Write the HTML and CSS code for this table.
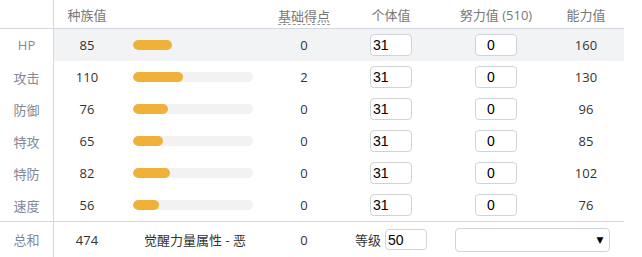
FILE: index.html
```html
<!DOCTYPE html>
<html lang="zh">
<head>
<meta charset="utf-8">
<link rel="stylesheet" href="styles.css">
</head>
<body>
<div class="stats">
  <div class="row head">
    <div class="c lbl"></div>
    <div class="c">种族值</div>
    <div class="c"></div>
    <div class="c"><span class="dotted">基础得点</span></div>
    <div class="c">个体值</div>
    <div class="c">努力值 (510)</div>
    <div class="c">能力值</div>
  </div>
  <div class="row hl">
    <div class="c lbl">HP</div>
    <div class="c num">85</div>
    <div class="c barc"><div class="track"><div class="fill" style="width:39px"></div></div></div>
    <div class="c num">0</div>
    <div class="c"><input class="box" value="31"></div>
    <div class="c"><input class="box ev" value="0"></div>
    <div class="c num">160</div>
  </div>
  <div class="row">
    <div class="c lbl">攻击</div>
    <div class="c num">110</div>
    <div class="c barc"><div class="track"><div class="fill" style="width:50px"></div></div></div>
    <div class="c num">2</div>
    <div class="c"><input class="box" value="31"></div>
    <div class="c"><input class="box ev" value="0"></div>
    <div class="c num">130</div>
  </div>
  <div class="row">
    <div class="c lbl">防御</div>
    <div class="c num">76</div>
    <div class="c barc"><div class="track"><div class="fill" style="width:35px"></div></div></div>
    <div class="c num">0</div>
    <div class="c"><input class="box" value="31"></div>
    <div class="c"><input class="box ev" value="0"></div>
    <div class="c num">96</div>
  </div>
  <div class="row">
    <div class="c lbl">特攻</div>
    <div class="c num">65</div>
    <div class="c barc"><div class="track"><div class="fill" style="width:30px"></div></div></div>
    <div class="c num">0</div>
    <div class="c"><input class="box" value="31"></div>
    <div class="c"><input class="box ev" value="0"></div>
    <div class="c num">85</div>
  </div>
  <div class="row">
    <div class="c lbl">特防</div>
    <div class="c num">82</div>
    <div class="c barc"><div class="track"><div class="fill" style="width:37px"></div></div></div>
    <div class="c num">0</div>
    <div class="c"><input class="box" value="31"></div>
    <div class="c"><input class="box ev" value="0"></div>
    <div class="c num">102</div>
  </div>
  <div class="row">
    <div class="c lbl">速度</div>
    <div class="c num">56</div>
    <div class="c barc"><div class="track"><div class="fill" style="width:26px"></div></div></div>
    <div class="c num">0</div>
    <div class="c"><input class="box" value="31"></div>
    <div class="c"><input class="box ev" value="0"></div>
    <div class="c num">76</div>
  </div>
  <div class="row total">
    <div class="c lbl">总和</div>
    <div class="c num">474</div>
    <div class="c hp">觉醒力量属性 - 恶</div>
    <div class="c num">0</div>
    <div class="c level"><span>等级</span><input class="box lv" value="50"></div>
    <div class="c wide"><div class="sel"><span class="arrow">▼</span></div></div>
  </div>
</div>
</body>
</html>
```
FILE: styles.css
```css
html, body {
  margin: 0;
  padding: 0;
  background: #fff;
}
body {
  font-family: "Open Sans", "Noto Sans CJK SC", sans-serif;
  font-size: 13px;
  color: #333;
}
.stats {
  width: 624px;
}
.row {
  display: grid;
  grid-template-columns: 54px 66px 150px 68px 106px 104px 76px;
  height: 32px;
}
.c {
  display: flex;
  align-items: center;
  justify-content: center;
}
.lbl {
  border-right: 1px solid #d3d7de;
  color: #808898;
}
.head {
  height: 28px;
  border-bottom: 1px solid #d3d7de;
  color: #777;
}
.dotted {
  border-bottom: 1px dashed #999;
  line-height: 16px;
  margin-top: 4px;
}
.hl .c:not(.lbl) {
  background: #f2f3f5;
}
.num {
  color: #333;
}
.barc {
  justify-content: flex-start;
  padding-left: 13px;
}
.track {
  width: 120px;
  height: 10px;
  border-radius: 5px;
  background: #f2f2f2;
  overflow: hidden;
}
.hl .track {
  background: transparent;
}
.fill {
  height: 10px;
  border-radius: 5px;
  background: #efb13a;
}
.box {
  box-sizing: border-box;
  width: 42px;
  height: 22px;
  margin: 0;
  padding: 1px 2px;
  border: 1px solid #cfd3da;
  border-radius: 4px;
  background: #fff;
  font-family: "Liberation Sans", Arial, sans-serif;
  font-size: 14px;
  color: #000;
  outline: none;
}
.ev {
  padding-left: 11px;
}
.total {
  height: 35px;
  border-top: 1px solid #d3d7de;
  grid-template-columns: 54px 66px 150px 68px 106px 180px;
}
.hp {
  color: #333;
}
.level {
  gap: 4px;
}
.level span {
  color: #333;
}
.lv {
  height: 21px;
}
.sel {
  position: relative;
  box-sizing: border-box;
  width: 155px;
  height: 24px;
  border: 1px solid #cfd3da;
  border-radius: 4px;
  background: #fff;
  margin-right: 4px;
}
.arrow {
  position: absolute;
  right: 5px;
  top: 5px;
  font-size: 9px;
  line-height: 12px;
  color: #000;
  font-family: "DejaVu Sans", sans-serif;
}
```
